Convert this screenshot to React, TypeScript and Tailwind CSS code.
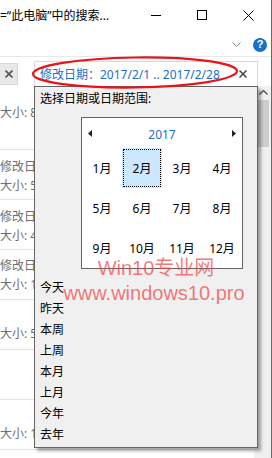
import React from 'react';

// ─── Data ────────────────────────────────────────────────────────────
const files: { h: string; pt: string; lines: string[] }[] = [
  { h: 'h-[64px]', pt: 'pt-[17px]', lines: ['大小: 8.25 KB'] },
  { h: 'h-[50px]', pt: 'pt-[7px]', lines: ['修改日期: 2017/2/27 9:14', '大小: 5.61 KB'] },
  { h: 'h-[50px]', pt: 'pt-[7px]', lines: ['修改日期: 2017/2/24 16:02', '大小: 4.03 KB'] },
  { h: 'h-[50px]', pt: 'pt-[6px]', lines: ['修改日期: 2017/2/21 11:40', '大小: 1.17 KB'] },
  { h: 'h-[50px]', pt: 'pt-[24px]', lines: ['大小: 5.02 KB'] },
  { h: 'h-[50px]', pt: 'pt-[24px]', lines: [] },
  { h: 'h-[50px]', pt: 'pt-[24px]', lines: ['大小: 1.88 KB'] },
];

const months = ['1月', '2月', '3月', '4月', '5月', '6月', '7月', '8月', '9月', '10月', '11月', '12月'];
const quick = ['今天', '昨天', '本周', '上周', '本月', '上月', '今年', '去年'];

export default function App() {
  return (
    <div className="relative w-[272px] h-[458px] overflow-hidden bg-white border-r border-[#2b74c7] font-['Noto_Sans','Noto_Sans_CJK_SC',sans-serif] text-[12px] text-black">
      {/* Title bar */}
      <div className="flex h-[30px] items-center">
        <div className="flex-1 whitespace-nowrap overflow-hidden leading-[16px] pt-[2px]">=“此电脑”中的搜索...</div>
        <div className="flex">
          <div className="flex h-[30px] w-[46px] items-center justify-center">
            <div className="h-px w-[10px] bg-black" />
          </div>
          <div className="flex h-[30px] w-[46px] items-center justify-center">
            <div className="h-[10px] w-[10px] border border-black" />
          </div>
          <div className="flex h-[30px] w-[46px] items-center justify-center">
            <svg width="11" height="11" viewBox="0 0 11 11">
              <path d="M0.5 0.5 L10.5 10.5 M10.5 0.5 L0.5 10.5" stroke="#000" strokeWidth="1" />
            </svg>
          </div>
        </div>
      </div>

      {/* Ribbon row */}
      <div className="flex h-[27px] items-center justify-end gap-[12px] pr-[4px] pt-[3px] border-b border-[#e8e8e8]">
        <svg width="9" height="5" viewBox="0 0 9 5">
          <path d="M0.5 0.5 L4.5 4.5 L8.5 0.5" stroke="#8a8a8a" strokeWidth="1" fill="none" />
        </svg>
        <div className="flex h-[14px] w-[14px] items-center justify-center rounded-full bg-[#1a6fc6] text-[11px] font-bold leading-none text-white font-['Liberation_Sans',sans-serif]">?</div>
      </div>

      {/* Search row */}
      <div className="flex h-[29px] items-start">
        <div className="mt-[6px] flex h-[22px] w-[18px] items-center justify-center bg-[#e8e8e8] border border-l-0 border-[#d6d6d6]">
          <svg width="8" height="8" viewBox="0 0 8 8">
            <path d="M0.5 0.5 L7.5 7.5 M7.5 0.5 L0.5 7.5" stroke="#555" strokeWidth="1.6" />
          </svg>
        </div>
        <div className="ml-[16px] mt-[4px] flex h-[25px] w-[224px] items-center justify-between border border-b-0 border-[#d9d9d9] pl-[5px] pr-[10px]">
          <span className="whitespace-nowrap text-[#1c6ec6] leading-[16px] pt-[2px]">修改日期：2017/2/1 .. 2017/2/28</span>
          <svg width="8" height="8" viewBox="0 0 8 8">
            <path d="M0.5 0.5 L7.5 7.5 M7.5 0.5 L0.5 7.5" stroke="#444" strokeWidth="1.5" />
          </svg>
        </div>
      </div>

      {/* Body: file list + scrollbar */}
      <div className="flex h-[372px]">
        <div className="flex-1 text-[#6d6d6d]">
          {files.map((f, i) => (
            <div key={i} className={`${f.h} ${f.pt} border-b border-[#e3e3e3] leading-[19px]`}>
              {f.lines.map((l, j) => (
                <div key={j} className="w-[34px] overflow-hidden whitespace-nowrap">{l}</div>
              ))}
            </div>
          ))}
        </div>
        <div className="flex w-[17px] flex-col items-center bg-[#f0f0f0]">
          <svg className="mt-[4px] ml-[1px]" width="9" height="5" viewBox="0 0 9 5">
            <path d="M0.5 4.5 L4.5 0.5 L8.5 4.5" stroke="#505050" strokeWidth="1.3" fill="none" />
          </svg>
          <div className="mt-[5px] h-[47px] w-[13px] bg-[#cdcdcd]" />
        </div>
      </div>

      {/* Date picker dropdown */}
      <div className="absolute left-[34px] top-[86px] w-[224px] h-[362px] bg-[#f0f0f0] border border-[#646464] shadow-[3px_3px_3px_rgba(0,0,0,0.35)]">
        <div className="pl-[5px] pt-[4px] leading-[16px]">选择日期或日期范围:</div>
        <div className="ml-[46px] mt-[10px] w-[162px] border border-[#646464] bg-white">
          <div className="flex h-[30px] items-center justify-between px-[6px]">
            <svg width="4" height="7" viewBox="0 0 4 7">
              <path d="M4 0 L0 3.5 L4 7 Z" fill="#222" />
            </svg>
            <span className="text-[#1c6ec6] leading-[16px] pt-[3px]">2017</span>
            <svg width="4" height="7" viewBox="0 0 4 7">
              <path d="M0 0 L4 3.5 L0 7 Z" fill="#222" />
            </svg>
          </div>
          <div className="grid grid-cols-4">
            {months.map((m) => (
              <div
                key={m}
                className={
                  m === '2月'
                    ? 'relative flex h-[40px] items-center justify-center bg-[#cce8ff]'
                    : 'flex h-[40px] items-center justify-center'
                }
              >
                {m === '2月' && <div className="absolute inset-[1px] border border-dotted border-black" />}
                <span className="relative leading-[16px] pt-[1px]">{m}</span>
              </div>
            ))}
          </div>
        </div>
        <div className="mt-[8px] pl-[5px] leading-[21px]">
          {quick.map((q) => (
            <div key={q}>{q}</div>
          ))}
        </div>
      </div>

      {/* Red ellipse mark */}
      <svg className="absolute left-[30px] top-[54px] pointer-events-none" width="212" height="38" viewBox="0 0 212 38">
        <ellipse cx="105" cy="18.5" rx="102" ry="15" fill="none" stroke="#e8141b" strokeWidth="2.2" transform="rotate(-0.8 105 18.5)" />
      </svg>

      {/* Watermark */}
      <div className="absolute left-[58px] top-[256px] flex w-[192px] flex-col items-center pointer-events-none font-['Liberation_Sans','Noto_Sans_CJK_SC',sans-serif] text-[20px] leading-[25px] text-[rgba(240,70,70,0.72)]">
        <span className="pl-[4px]">Win10专业网</span>
        <span>www.windows10.pro</span>
      </div>
    </div>
  );
}
